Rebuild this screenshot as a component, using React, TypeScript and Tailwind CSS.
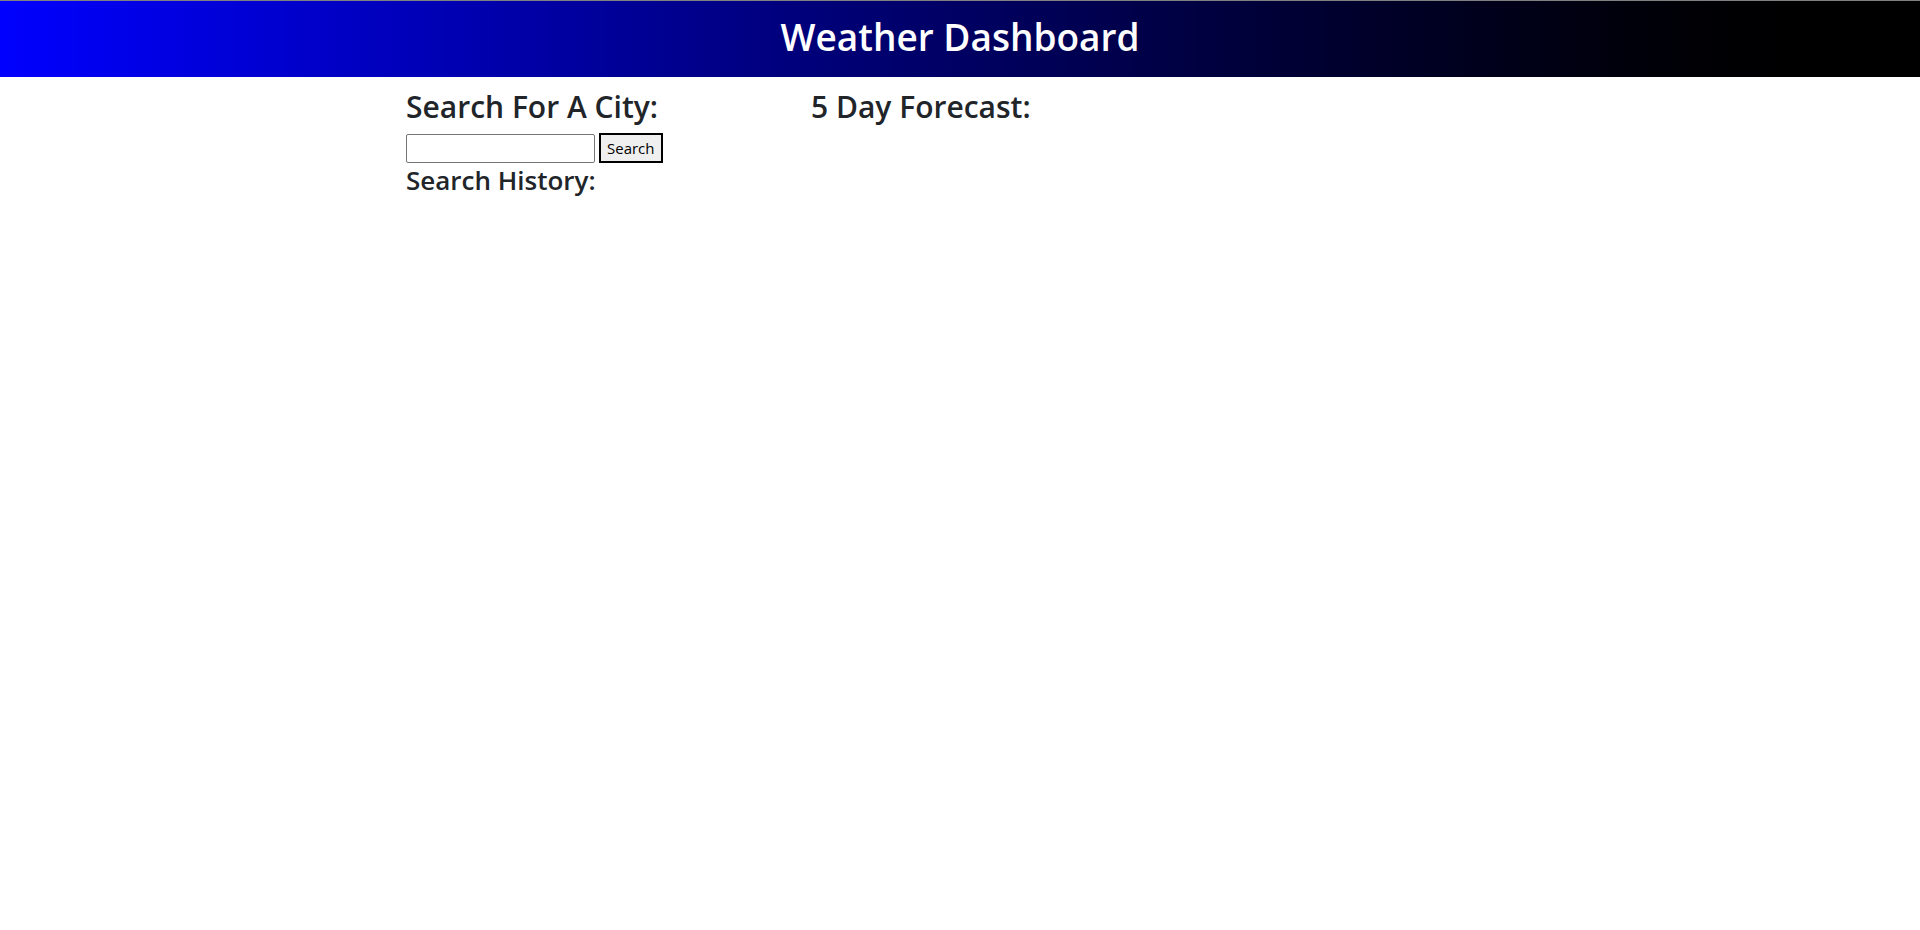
export default function App() {
  return (
    <div className="min-h-screen bg-white font-['Open_Sans',sans-serif] text-[#212529]">
      <header className="flex h-[77px] items-center justify-center border-t border-[#808080] bg-gradient-to-r from-[#0000ff] to-[#000000] pb-[6px]">
        <h1 className="text-[37px] font-semibold leading-none text-white">Weather Dashboard</h1>
      </header>

      <main className="flex pl-[406px] pt-[12px]">
        <section className="w-[405px]">
          <h3 className="text-[30px] font-semibold leading-[1.2]">Search For A City:</h3>
          <div className="mt-[8px] flex items-center gap-[4px]">
            <input
              type="text"
              className="h-[29px] w-[189px] rounded-[2px] border border-[#767676] px-1 text-sm"
            />
            <button className="h-[30px] border-2 border-black bg-[#efefef] px-[6px] text-[15px] leading-none text-black">
              Search
            </button>
          </div>
          <h4 className="mt-[2px] text-[26px] font-semibold leading-[1.2]">Search History:</h4>
        </section>

        <section>
          <h3 className="text-[30px] font-semibold leading-[1.2]">5 Day Forecast:</h3>
        </section>
      </main>
    </div>
  )
}
